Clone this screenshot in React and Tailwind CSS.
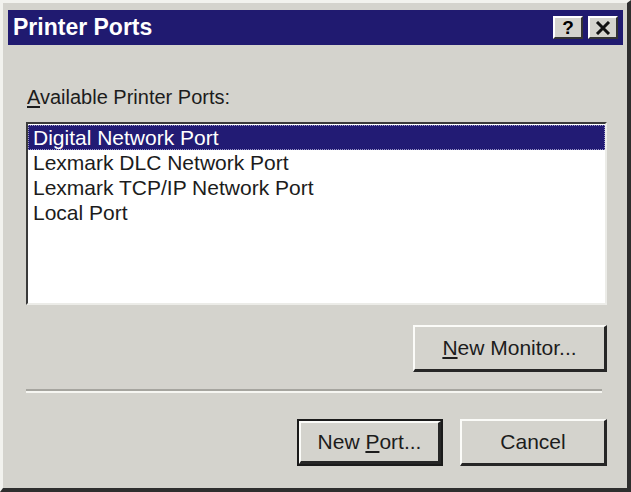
import React from 'react'

const ports = [
    'Digital Network Port',
    'Lexmark DLC Network Port',
    'Lexmark TCP/IP Network Port',
    'Local Port',
]

function Button({ children, className }) {
    return (
        <div className={`flex items-center justify-center bg-[#d4d3cd] border-t-2 border-l-2 border-[#fbfbf8] border-r-[3px] border-b-[3px] border-r-[#262626] border-b-[#262626] text-[21px] text-[#1c1c1c] ${className}`}>
            {children}
        </div>
    )
}

function PrinterPorts() {
    const selected = 0;
    return (
        <div className="w-[631px] h-[492px] bg-[#d4d3cd] border-t-[3px] border-l-[3px] border-[#f2f2ee] border-r-[4px] border-b-[4px] border-r-[#2e2e2e] border-b-[#2e2e2e] pl-[5px] pr-[4px] pt-[7px] font-['Liberation_Sans',Arial,sans-serif]">
            {/* title bar */}
            <div className="h-[35px] bg-[#201a70] flex items-center justify-between pl-[5px] pr-[5px]">
                <span className="text-white font-bold text-[23px] leading-none">Printer Ports</span>
                <div className="flex gap-[5px]">
                    <div className="w-[30px] h-[23px] bg-[#d4d3cd] border-t-2 border-l-2 border-white border-r-2 border-b-2 border-r-[#333] border-b-[#333] flex items-center justify-center text-[19px] font-bold leading-none text-black">?</div>
                    <div className="w-[30px] h-[23px] bg-[#d4d3cd] border-t-2 border-l-2 border-white border-r-2 border-b-2 border-r-[#333] border-b-[#333] flex items-center justify-center">
                        <svg width="16" height="14" viewBox="0 0 16 14">
                            <path d="M2 1 L14 13 M14 1 L2 13" stroke="#111" strokeWidth="3" />
                        </svg>
                    </div>
                </div>
            </div>

            <div className="pl-[18px] pr-[16px]">
                <p className="mt-[40px] text-[20px] leading-[24px] text-[#1c1c1c] pl-[1px]">
                    <span className="underline underline-offset-2">A</span>vailable Printer Ports:
                </p>

                {/* port list */}
                <div className="mt-[13px] h-[183px] bg-white border-t-2 border-l-2 border-[#3a3a3a] border-b-2 border-r-2 border-b-[#ecece8] border-r-[#ecece8] pt-[1px]">
                    {ports.map((p, i) => (
                        <div key={p} className={i === selected
                            ? 'h-[25px] leading-[23px] pl-[4px] bg-[#221b74] text-white text-[21px] border border-dotted border-[#9a96c8]'
                            : 'h-[25px] leading-[25px] pl-[5px] text-[#1c1c1c] text-[21px]'}>
                            {p}
                        </div>
                    ))}
                </div>

                <div className="flex justify-end mt-[20px]">
                    <Button className="w-[194px] h-[47px]">
                        <span><span className="underline underline-offset-2">N</span>ew Monitor...</span>
                    </Button>
                </div>

                <div className="mt-[17px] mr-[5px] border-t-2 border-[#a6a59f] border-b-2 border-b-[#f6f6f2]"></div>

                <div className="flex justify-end gap-[17px] mt-[26px]">
                    <div className="border-2 border-[#1a1a1a]">
                        <Button className="w-[142px] h-[43px]">
                            <span>New <span className="underline underline-offset-2">P</span>ort...</span>
                        </Button>
                    </div>
                    <Button className="w-[147px] h-[47px]">Cancel</Button>
                </div>
            </div>
        </div>
    )
}

export default function App() {
    return <PrinterPorts />
}
